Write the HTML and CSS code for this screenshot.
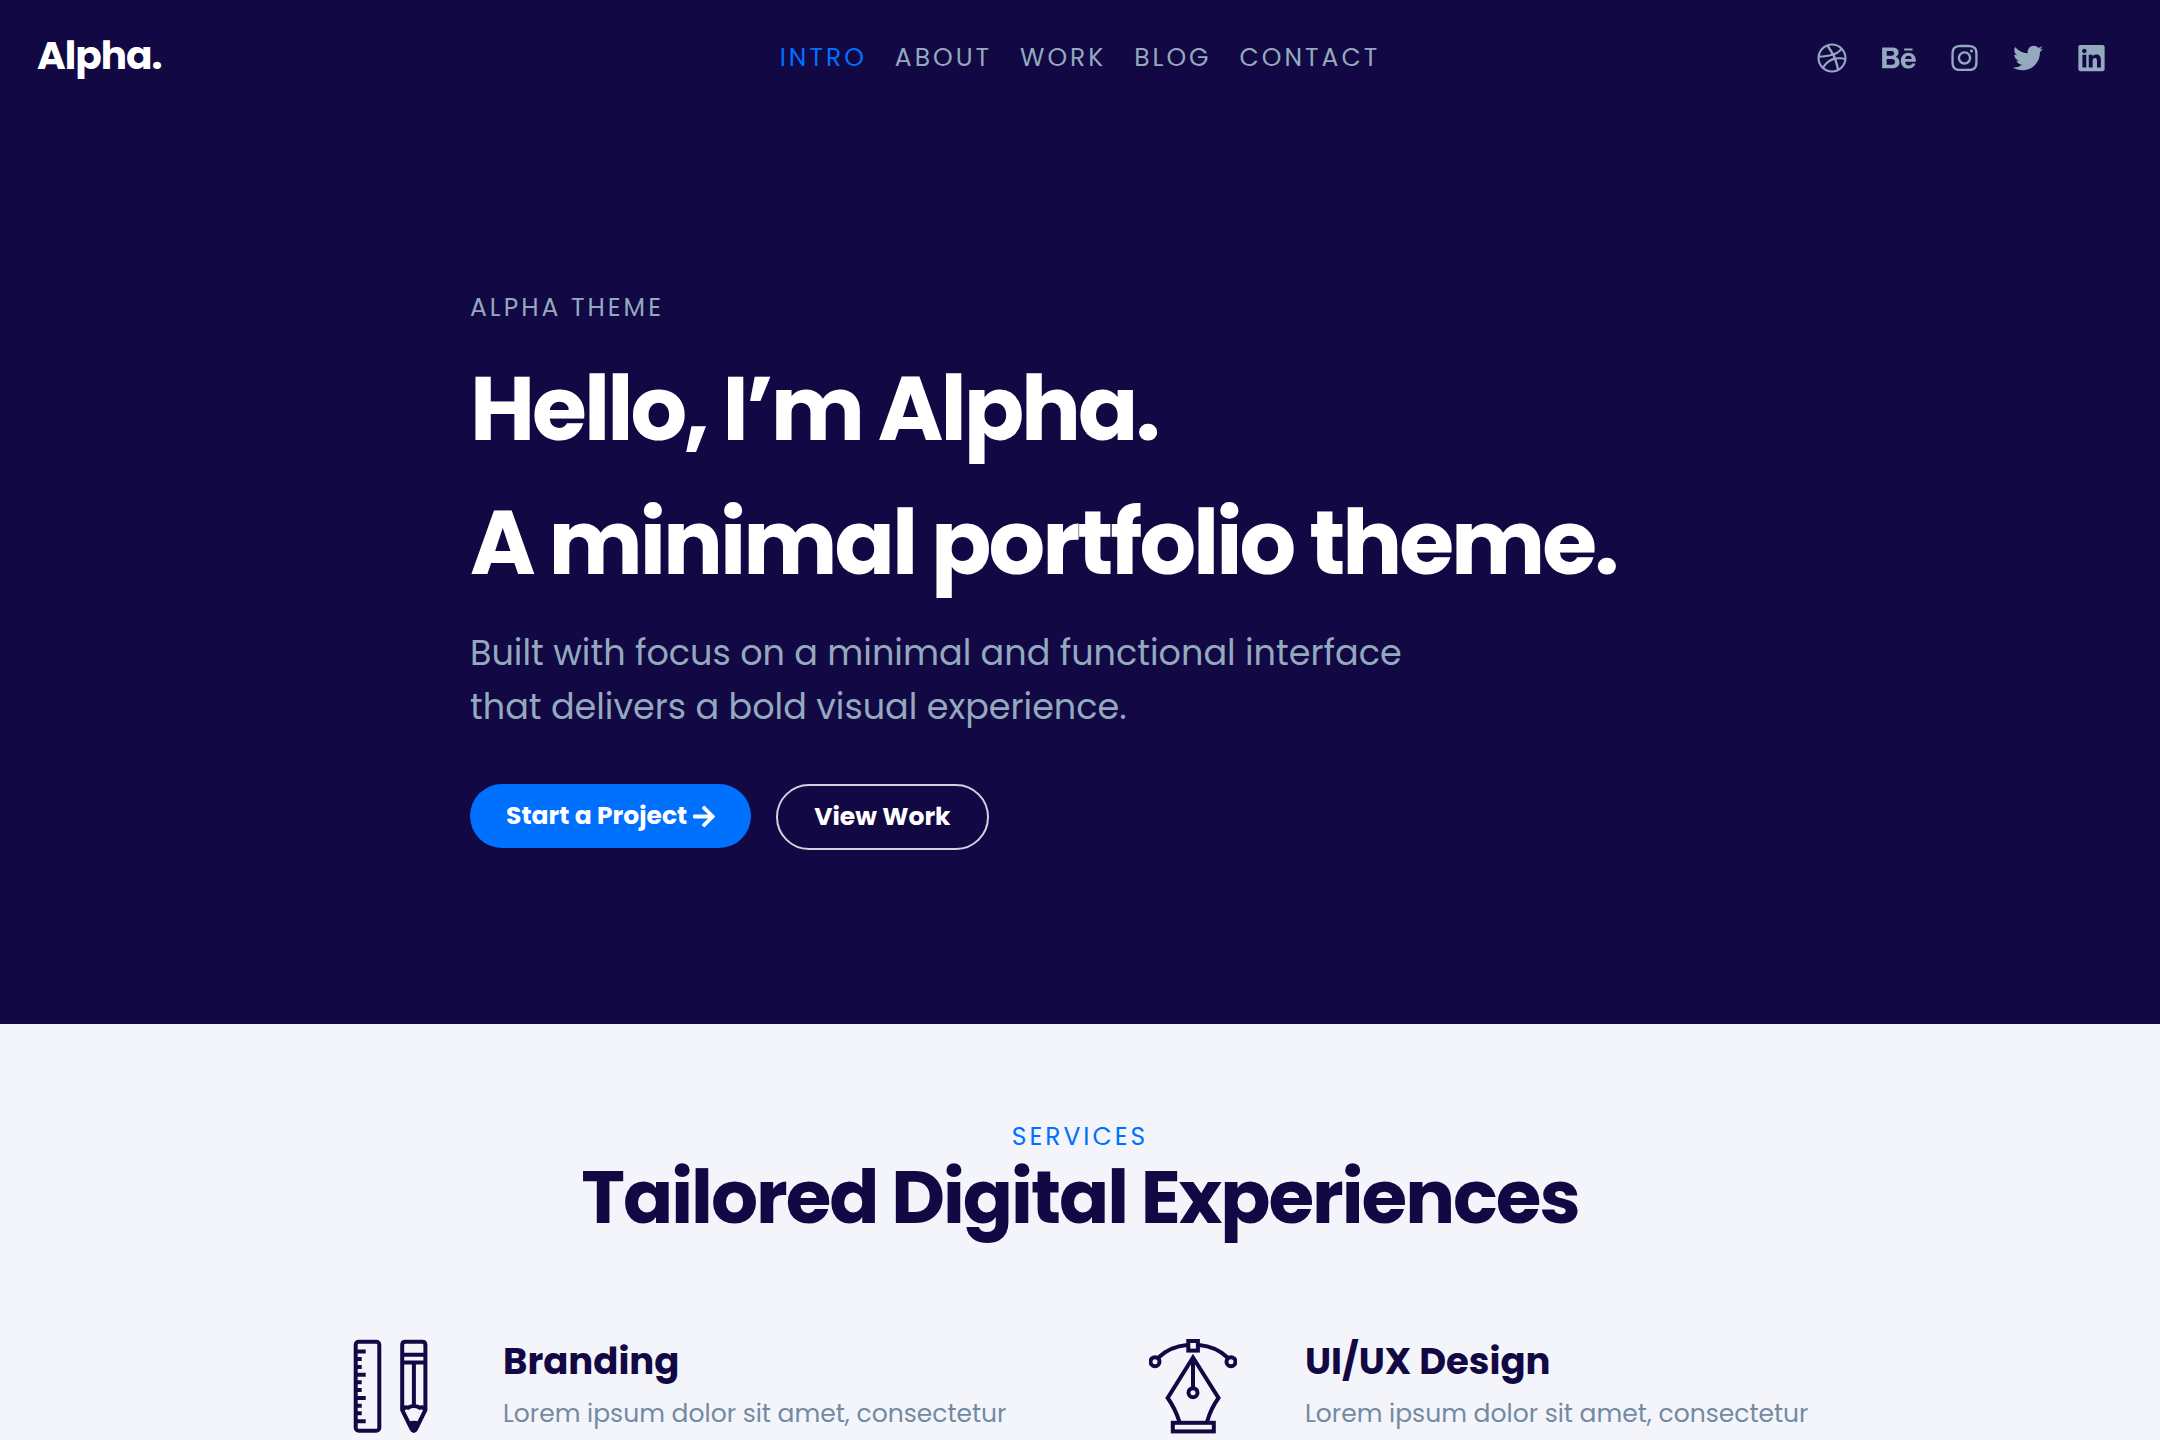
FILE: index.html
```html
<!DOCTYPE html>
<html lang="en">
<head>
<meta charset="utf-8">
<meta name="viewport" content="width=device-width, initial-scale=1">
<title>Alpha.</title>
<link rel="stylesheet" href="styles.css">
</head>
<body>
<div class="top">
  <header class="header">
    <a class="logo" href="#intro">Alpha.</a>
    <nav class="nav">
      <a class="nav-link active" href="#intro">INTRO</a>
      <a class="nav-link" href="#about">ABOUT</a>
      <a class="nav-link" href="#work">WORK</a>
      <a class="nav-link" href="#blog">BLOG</a>
      <a class="nav-link" href="#contact">CONTACT</a>
    </nav>
    <div class="social">
      <a class="social-link" href="#dribbble" aria-label="Dribbble"><svg width="30" height="30" viewBox="0 0 512 512"><path d="M256 8C119.252 8 8 119.252 8 256s111.252 248 248 248 248-111.252 248-248S392.748 8 256 8zm163.97 114.366c29.503 36.046 47.369 81.957 47.835 131.955-6.984-1.477-77.018-15.682-147.502-6.818-5.752-14.041-11.181-26.393-18.617-41.614 78.321-31.977 113.818-77.482 118.284-83.523zM396.421 97.87c-3.81 5.427-35.697 48.286-111.021 76.519-34.712-63.776-73.185-116.168-79.04-124.008 67.176-16.193 137.966 1.27 190.061 47.489zm-230.48-33.25c5.585 7.659 43.438 60.116 78.537 122.509-99.087 26.313-186.36 25.934-195.834 25.809C62.38 147.205 106.678 92.573 165.941 64.62zM44.17 256.323c0-2.166.043-4.322.108-6.473 9.268.19 111.92 1.513 217.706-30.146 6.064 11.868 11.857 23.915 17.174 35.949-76.599 21.575-146.194 83.527-180.531 142.306C64.794 360.405 44.17 310.73 44.17 256.323zm81.807 167.113c22.127-45.233 82.178-103.622 167.579-132.756 29.74 77.283 42.039 142.053 45.189 160.638-68.112 29.013-150.015 21.053-212.768-27.882zm248.38 8.489c-2.171-12.886-13.446-74.897-41.152-151.033 66.38-10.626 124.7 6.768 131.947 9.055-9.442 58.941-43.273 109.844-90.795 141.978z"/></svg></a>
      <a class="social-link" href="#behance" aria-label="Behance"><svg width="34" height="30" viewBox="0 0 576 512"><path d="M232 237.2c31.8-15.2 48.4-38.2 48.4-74 0-70.6-52.6-87.8-113.3-87.8H0v354.4h171.8c64.4 0 124.9-30.9 124.9-102.9 0-44.5-21.1-77.4-64.7-89.7zM77.9 135.9H151c28.1 0 53.4 7.9 53.4 40.5 0 30.1-19.7 42.2-47.5 42.2h-79v-82.7zm83.3 233.7H77.9V272h84.9c34.3 0 56 14.3 56 50.6 0 35.8-25.9 47-57.6 47zm358.5-240.7H376V94h143.7v34.9zM576 305.2c0-75.9-44.4-139.2-124.9-139.2-78.2 0-131.3 58.8-131.3 135.8 0 79.9 50.3 134.7 131.3 134.7 60.3 0 99.6-27.4 118.9-86.3H512c-6.7 21.9-34.3 33.5-55.7 33.5-41.3 0-63-24.2-63-65.3h182.3c.3-4.2.4-8.8.4-13.2zM390.4 274c2.3-33.7 24.7-54.8 58.5-54.8 35.4 0 53.2 20.8 56.2 54.8H390.4z"/></svg></a>
      <a class="social-link" href="#instagram" aria-label="Instagram"><svg width="27" height="30" viewBox="0 0 448 512"><path d="M224.1 141c-63.6 0-114.9 51.3-114.9 114.9s51.3 114.9 114.9 114.9S339 319.5 339 255.9 287.7 141 224.1 141zm0 189.6c-41.1 0-74.7-33.5-74.7-74.7s33.5-74.7 74.7-74.7 74.7 33.5 74.7 74.7-33.6 74.7-74.7 74.7zm146.4-194.3c0 14.9-12 26.8-26.8 26.8-14.9 0-26.8-12-26.8-26.8s12-26.8 26.8-26.8 26.8 12 26.8 26.8zm76.1 27.2c-1.7-35.9-9.9-67.7-36.2-93.9-26.2-26.2-58-34.4-93.9-36.2-37-2.1-147.9-2.1-184.9 0-35.8 1.7-67.6 9.9-93.9 36.1s-34.4 58-36.2 93.9c-2.1 37-2.1 147.9 0 184.9 1.7 35.9 9.9 67.7 36.2 93.9s58 34.4 93.9 36.2c37 2.1 147.9 2.1 184.9 0 35.9-1.7 67.7-9.9 93.9-36.2 26.2-26.2 34.4-58 36.2-93.9 2.1-37 2.1-147.8 0-184.8zM398.8 388c-7.8 19.6-22.9 34.7-42.6 42.6-29.5 11.7-99.5 9-132.1 9s-102.7 2.6-132.1-9c-19.6-7.8-34.7-22.9-42.6-42.6-11.7-29.5-9-99.5-9-132.1s-2.6-102.7 9-132.1c7.8-19.6 22.9-34.7 42.6-42.6 29.5-11.7 99.5-9 132.1-9s102.7-2.6 132.1 9c19.6 7.8 34.7 22.9 42.6 42.6 11.7 29.5 9 99.5 9 132.1s2.7 102.7-9 132.1z"/></svg></a>
      <a class="social-link" href="#twitter" aria-label="Twitter"><svg width="30" height="30" viewBox="0 0 512 512"><path d="M459.37 151.716c.325 4.548.325 9.097.325 13.645 0 138.72-105.583 298.558-298.558 298.558-59.452 0-114.68-17.219-161.137-47.106 8.447.974 16.568 1.299 25.34 1.299 49.055 0 94.213-16.568 130.274-44.832-46.132-.975-84.792-31.188-98.112-72.772 6.498.974 12.995 1.624 19.818 1.624 9.421 0 18.843-1.3 27.614-3.573-48.081-9.747-84.143-51.98-84.143-102.985v-1.299c13.969 7.797 30.214 12.67 47.431 13.319-28.264-18.843-46.781-51.005-46.781-87.391 0-19.492 5.197-37.36 14.294-52.954 51.655 63.675 129.3 105.258 216.365 109.807-1.624-7.797-2.599-15.918-2.599-24.04 0-57.828 46.782-104.934 104.934-104.934 30.213 0 57.502 12.67 76.67 33.137 23.715-4.548 46.456-13.32 66.599-25.34-7.798 24.366-24.366 44.833-46.132 57.827 21.117-2.273 41.584-8.122 60.426-16.243-14.292 20.791-32.161 39.308-52.628 54.253z"/></svg></a>
      <a class="social-link" href="#linkedin" aria-label="LinkedIn"><svg width="27" height="30" viewBox="0 0 448 512"><path d="M416 32H31.9C14.3 32 0 46.5 0 64.3v383.4C0 465.5 14.3 480 31.9 480H416c17.6 0 32-14.5 32-32.3V64.3c0-17.8-14.4-32.3-32-32.3zM135.4 416H69V202.2h66.5V416zm-33.2-243c-21.3 0-38.5-17.3-38.5-38.5S80.9 96 102.2 96c21.2 0 38.5 17.3 38.5 38.5 0 21.3-17.2 38.5-38.5 38.5zm282.1 243h-66.4V312c0-24.8-.5-56.7-34.5-56.7-34.6 0-39.9 27-39.9 54.9V416h-66.4V202.2h63.7v29.2h.9c8.9-16.8 30.6-34.5 62.9-34.5 67.2 0 79.7 44.3 79.7 101.9V416z"/></svg></a>
    </div>
  </header>
  <section class="hero" id="intro">
    <p class="eyebrow">ALPHA THEME</p>
    <h1 class="hero-title">Hello, I’m Alpha.<br>A minimal portfolio theme.</h1>
    <p class="hero-text">Built with focus on a minimal and functional interface<br>that delivers a bold visual experience.</p>
    <div class="actions">
      <a class="button button-primary" href="#contact">Start a Project <svg width="22" height="25" viewBox="0 0 448 512"><path d="M190.5 66.9l22.2-22.2c9.4-9.4 24.6-9.4 33.9 0L441 239c9.4 9.4 9.4 24.6 0 33.9L246.6 467.3c-9.4 9.4-24.6 9.4-33.9 0l-22.2-22.2c-9.5-9.5-9.3-25 .4-34.3L311.4 296H24c-13.3 0-24-10.7-24-24v-32c0-13.3 10.7-24 24-24h287.4L190.9 101.2c-9.8-9.3-10-24.8-.4-34.3z"/></svg></a>
      <a class="button button-outline" href="#work">View Work</a>
    </div>
  </section>
</div>
<main class="services">
  <p class="eyebrow eyebrow-blue">SERVICES</p>
  <h2 class="section-title">Tailored Digital Experiences</h2>
  <div class="service-grid">
    <article class="service">
      <svg class="service-icon" width="78" height="96" viewBox="0 0 78 96">
        <rect x="3.7" y="2.8" width="23.6" height="89" rx="3"/>
        <path d="M4 12.4h9.7M4 20h5.7M4 28h5.7M4 35.7h9.7M4 43.3h5.7M4 51h5.7M4 59h9.7M4 66.7h5.7M4 74.3h5.7M4 82.3h9.7"/>
        <path d="M50.2 71V6q0-3.2 3.2-3.2h16.8q3.2 0 3.2 3.2v65l-9.4 19q-2.2 4-4.4 0z"/>
        <path d="M50 15.7h24M50 23.6h24"/>
        <path d="M61.9 24v44M50.5 71q2-3.8 5.5-2.2 5.8-3.600 11.800 0 3.500-1.600 5.500 2.200"/>
        <path class="solid" d="M56 83q6-2.500 12 0l-4 8q-2 3-4 0z"/>
      </svg>
      <div class="service-body">
        <h3 class="service-title">Branding</h3>
        <p class="service-text">Lorem ipsum dolor sit amet, consectetur</p>
      </div>
    </article>
    <article class="service">
      <svg class="service-icon" width="88" height="96" viewBox="0 0 88 96">
        <path d="M9.5 18.500Q21 7.500 38 6M50 6q17 1.500 28.500 12.500"/>
        <rect x="39.3" y="2" width="9.6" height="9.6"/>
        <circle cx="6" cy="22.7" r="4.5"/>
        <circle cx="82" cy="22.7" r="4.5"/>
        <path d="M30.5 83Q26 69 18.700 59L44 18.500 69.500 59Q62 69 58 83M44 20v28"/>
        <circle cx="44" cy="53.7" r="4.5"/>
        <rect x="23.8" y="83.8" width="41" height="8.6"/>
      </svg>
      <div class="service-body">
        <h3 class="service-title">UI/UX Design</h3>
        <p class="service-text">Lorem ipsum dolor sit amet, consectetur</p>
      </div>
    </article>
  </div>
</main>
</body>
</html>
```
FILE: styles.css
```css
:root {
  --navy: #110844;
  --blue: #0070ff;
  --mist: #94a9be;
  --slate: #728aa2;
  --paper: #f4f5fb;
}

* {
  box-sizing: border-box;
}

body {
  margin: 0;
  background: var(--paper);
  color: var(--navy);
  font-family: Poppins, Inter, "Liberation Sans", sans-serif;
  font-size: 25px;
  line-height: 36px;
}

h1, h2, h3, p {
  margin: 0;
}

a {
  color: inherit;
  text-decoration: none;
}

.top {
  background: var(--navy);
  color: #fff;
}

.header {
  display: grid;
  grid-template-columns: 1fr auto 1fr;
  align-items: center;
  height: 116px;
  padding: 0 55px 0 37px;
}

.logo {
  padding-bottom: 5px;
  font-size: 39px;
  font-weight: 700;
  letter-spacing: -1px;
}

.nav {
  display: flex;
  gap: 28px;
  margin-left: 18px;
  color: var(--mist);
}

.nav-link {
  letter-spacing: 3px;
}

.nav-link.active {
  color: var(--blue);
}

.social {
  display: flex;
  justify-content: flex-end;
  gap: 35px;
  color: var(--mist);
}

.social-link {
  display: flex;
}

.social-link svg,
.button svg {
  fill: currentColor;
}

.hero {
  max-width: 1220px;
  margin: 0 auto;
  padding: 174px 0;
}

.eyebrow {
  color: var(--mist);
  letter-spacing: 3px;
}

.eyebrow-blue {
  color: var(--blue);
}

.hero-title {
  margin: 16px 0;
  font-size: 89px;
  font-weight: 700;
  line-height: 134px;
  letter-spacing: -3px;
}

.hero-text {
  color: var(--mist);
  font-size: 35px;
  line-height: 54px;
}

.actions {
  display: flex;
  align-items: flex-start;
  gap: 25px;
  margin-top: 50px;
}

.button {
  display: flex;
  align-items: center;
  gap: 6px;
  padding: 14px 36px;
  border-radius: 33px;
  font-weight: 700;
}

.button-primary {
  background: var(--blue);
}

.button-outline {
  padding: 13px 36px;
  border: 2px solid #d4d2de;
}

.services {
  padding-top: 95px;
  text-align: center;
}

.section-title {
  font-size: 74px;
  font-weight: 700;
  line-height: 84px;
  letter-spacing: -2px;
}

.service-grid {
  display: grid;
  grid-template-columns: 1fr 1fr;
  max-width: 1604px;
  margin: 100px auto 0;
  text-align: left;
}

.service {
  display: grid;
  grid-template-columns: 225px 1fr;
}

.service-icon {
  justify-self: center;
  fill: none;
  stroke: var(--navy);
  stroke-width: 4px;
}

.service-icon .solid {
  fill: var(--navy);
  stroke: none;
}

.service-title {
  font-size: 37px;
  font-weight: 700;
  line-height: 44px;
}

.service-text {
  margin-top: 13px;
  color: var(--slate);
}
```
